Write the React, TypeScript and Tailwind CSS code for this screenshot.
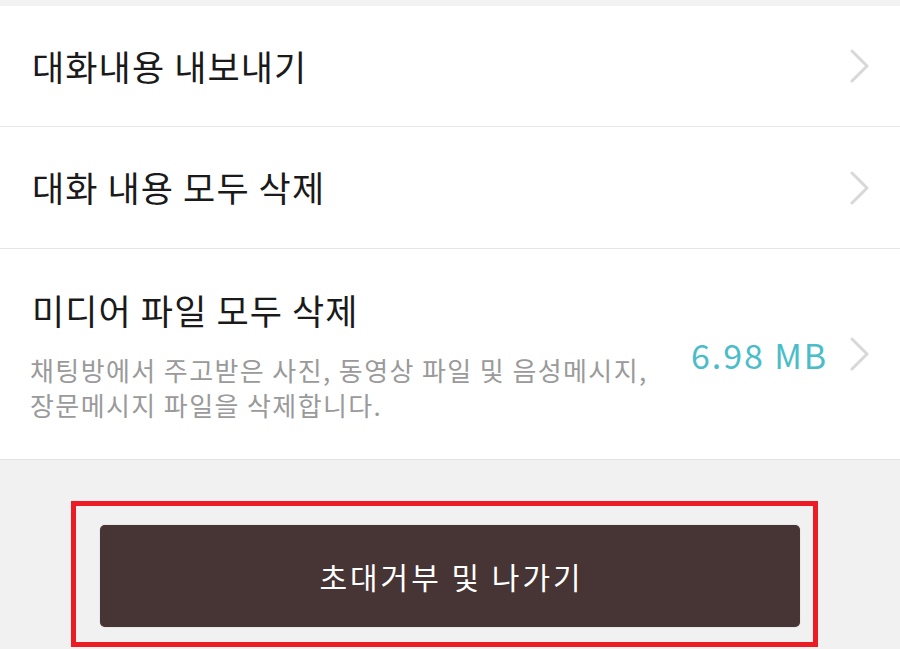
const FONT = "font-['Noto_Sans_CJK_KR','Noto_Sans',sans-serif]";

function Chevron() {
  return (
    <svg width="20" height="34" viewBox="0 0 20 34" fill="none" className="shrink-0">
      <path d="M2 2 L17 17 L2 32" stroke="#d8d8d8" strokeWidth="3" strokeLinecap="round" strokeLinejoin="round" />
    </svg>
  );
}

export default function App() {
  return (
    <div className={`w-[900px] h-[649px] overflow-hidden bg-[#f1f1f1] ${FONT}`}>
      <div className="h-[6px] bg-[#f2f2f2]" />

      <div className="bg-white">
        {/* export chat */}
        <div className="h-[121px] flex items-center justify-between pl-[32px] pr-[30px] border-b border-[#e5e5e5]">
          <span className="text-[35px] text-[#1a1a1a] tracking-[1.1px]">대화내용 내보내기</span>
          <Chevron />
        </div>

        {/* delete all chat */}
        <div className="h-[122px] flex items-center justify-between pl-[32px] pr-[30px] border-b border-[#e5e5e5]">
          <span className="text-[35px] text-[#1a1a1a] tracking-[1.1px]">대화 내용 모두 삭제</span>
          <Chevron />
        </div>

        {/* delete media */}
        <div className="h-[211px] flex items-center justify-between pl-[30px] pr-[30px] border-b border-[#e2e2e2]">
          <div className="flex flex-col">
            <span className="pl-[2px] text-[35px] leading-[46px] text-[#1a1a1a] tracking-[1.1px]">미디어 파일 모두 삭제</span>
            <p className="mt-[19px] text-[26px] leading-[35px] text-[#9a9a9a] tracking-[1.4px]">
              채팅방에서 주고받은 사진, 동영상 파일 및 음성메시지,
              <br />
              장문메시지 파일을 삭제합니다.
            </p>
          </div>
          <div className="flex items-center gap-[22px]">
            <span className="text-[34px] text-[#4bbdc9] tracking-[1.9px]">6.98 MB</span>
            <Chevron />
          </div>
        </div>
      </div>

      <div className="pt-[41px] pl-[71px]">
        <div className="w-[747px] h-[146px] border-[5px] border-[#ec1c24] pt-[19px] pl-[24px] pr-[12px]">
          <button className="w-[700px] h-[102px] rounded-[5px] bg-[#463534] shadow-[0_0_1px_rgba(0,0,0,0.4)] text-white text-[30px] tracking-[3px] pl-[3px]">
            초대거부 및 나가기
          </button>
        </div>
      </div>
    </div>
  );
}
